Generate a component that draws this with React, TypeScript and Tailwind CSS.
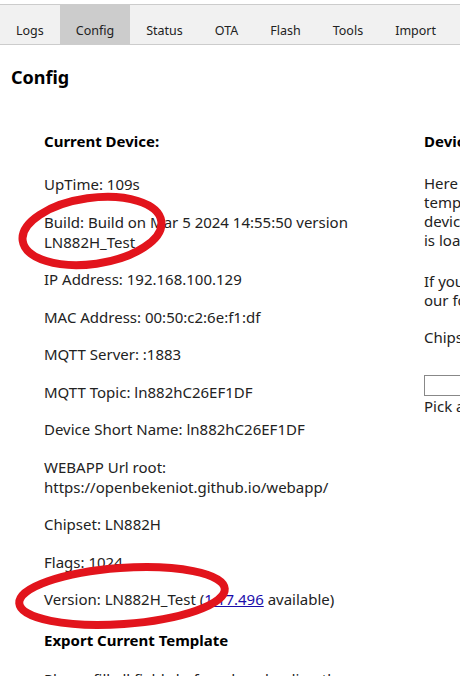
const tabs = ['Logs', 'Config', 'Status', 'OTA', 'Flash', 'Tools', 'Import'];

const deviceInfo = [
  'UpTime: 109s',
  'Build: Build on Mar 5 2024 14:55:50 version LN882H_Test',
  'IP Address: 192.168.100.129',
  'MAC Address: 00:50:c2:6e:f1:df',
  'MQTT Server: :1883',
  'MQTT Topic: ln882hC26EF1DF',
  'Device Short Name: ln882hC26EF1DF',
  'WEBAPP Url root: https://openbekeniot.github.io/webapp/',
  'Chipset: LN882H',
  'Flags: 1024',
];

function Annotations() {
  // red marker circles drawn over the screenshot
  return (
    <svg className="pointer-events-none absolute left-0 top-0" width="460" height="676">
      <ellipse
        cx="92"
        cy="231"
        rx="70"
        ry="33"
        transform="rotate(-8 92 231)"
        fill="none"
        stroke="#e2141c"
        strokeWidth="8"
      />
      <ellipse
        cx="122"
        cy="596"
        rx="103"
        ry="28"
        transform="rotate(-4 122 596)"
        fill="none"
        stroke="#e2141c"
        strokeWidth="8"
      />
    </svg>
  );
}

export default function App() {
  return (
    <div
      className="relative h-[676px] w-[460px] overflow-hidden bg-white text-[#222]"
      style={{ fontFamily: '"Noto Sans", "Open Sans", sans-serif' }}
    >
      {/* Tab bar */}
      <div className="mt-[4px] flex h-[41px] w-[760px] border-y border-[#ccc] bg-[#f1f1f1] text-[12.5px] leading-[18px]">
        {tabs.map((t) => (
          <div
            key={t}
            className={`px-4 pt-[17px] ${t === 'Config' ? 'bg-[#ccc]' : ''}`}
          >
            {t}
          </div>
        ))}
      </div>

      <div className="px-[11px]">
        <h2 className="mt-[20px] text-[18px] font-bold leading-[24px] text-black">Config</h2>

        <div className="mt-[42px] flex w-[760px] text-[15px] leading-[20px]">
          {/* Left column */}
          <div className="w-[413px] shrink-0 pl-[33px] pr-[30px]">
            <h4 className="mb-[23px] font-bold text-black">Current Device:</h4>
            {deviceInfo.map((line) => (
              <p key={line} className="mb-[17.5px]">
                {line}
              </p>
            ))}
            <p className="mb-[21px]">
              Version: LN882H_Test (
              <a href="#" className="text-[#1a0dab] underline">
                1.17.496
              </a>{' '}
              available)
            </p>
            <h4 className="mb-[19px] font-bold text-black">Export Current Template</h4>
            <p>Please fill all fields before downloading the template.</p>
          </div>

          {/* Right column */}
          <div className="w-[320px] shrink-0">
            <h4 className="mb-[23px] font-bold text-black">Device Templates List:</h4>
            <p className="mb-[22px] whitespace-nowrap leading-[19px]">
              Here you can pick a template from our
              <br />
              templates list. Selecting a template for your
              <br />
              device will fill the config once the list
              <br />
              is loaded from GitHub.
            </p>
            <p className="mb-[17px] whitespace-nowrap leading-[19px]">
              If your device is missing, please check
              <br />
              our forum or submit a new template.
            </p>
            <p className="mb-[28px]">Chipset filter:</p>
            <input className="block h-[21px] w-[200px] border border-[#888] bg-white" />
            <p>Pick a device from the list above.</p>
          </div>
        </div>
      </div>

      <Annotations />
    </div>
  );
}
